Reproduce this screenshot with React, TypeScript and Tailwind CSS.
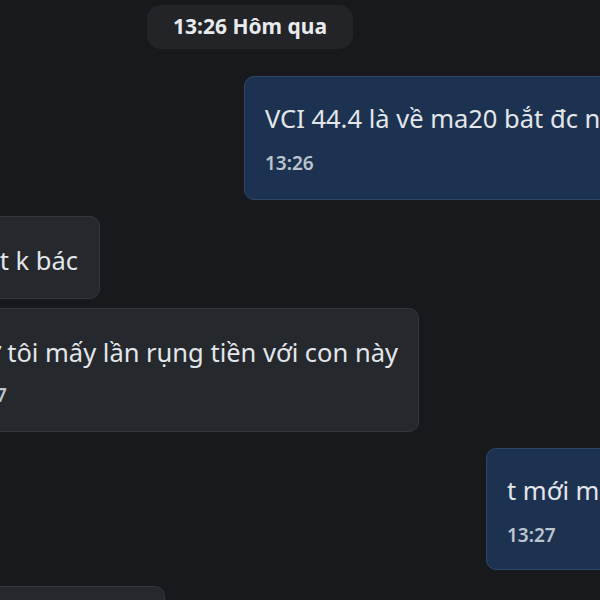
export default function App() {
  const font = { fontFamily: '"Noto Sans", "Segoe UI", sans-serif' };
  return (
    <div
      className="w-[600px] h-[600px] overflow-hidden bg-[#17191d] flex flex-col text-[#e3e6ea]"
      style={font}
    >
      <div className="mt-[5px] ml-[147px] shrink-0 w-[206px] h-[44px] rounded-[14px] bg-[#222428] flex items-center justify-center text-[21px] font-bold text-[#e8eaed]">
        13:26 Hôm qua
      </div>

      <div className="mt-[27px] ml-[244px] shrink-0 w-[420px] h-[124px] rounded-[10px] bg-[#1d3250] border border-[#2e4766] pl-[20px] pt-[24px]">
        <div className="text-[25.5px] leading-[34px] whitespace-nowrap">VCI 44.4 là về ma20 bắt đc nhiều</div>
        <div className="mt-[15px] text-[19px] leading-[26px] font-semibold text-[#bcc4ce]">13:26</div>
      </div>

      <div className="mt-[16px] w-[100px] flex justify-end shrink-0">
        <div className="shrink-0 h-[83px] rounded-[10px] bg-[#25282d] border border-[#33363c] pr-[21px] pt-[26px] whitespace-nowrap pl-[40px]">
          <div className="text-[25.5px] leading-[34px]">đc t k bác</div>
        </div>
      </div>

      <div className="mt-[9px] w-[419px] flex justify-end shrink-0">
        <div className="shrink-0 h-[124px] rounded-[10px] bg-[#25282d] border border-[#33363c] pr-[20px] pt-[26px] whitespace-nowrap pl-[20px] flex flex-col items-start">
          <div className="text-[25.5px] leading-[34px]">Như tôi mấy lần rụng tiền với con này</div>
          <div className="mt-[13px] ml-[10px] text-[19px] leading-[26px] font-semibold text-[#bcc4ce]">13:27</div>
        </div>
      </div>

      <div className="mt-[16px] ml-[486px] shrink-0 w-[300px] h-[122px] rounded-[10px] bg-[#1d3250] border border-[#2e4766] pl-[20px] pt-[24px]">
        <div className="text-[25.5px] leading-[34px] whitespace-nowrap">t mới mua lại</div>
        <div className="mt-[15px] text-[19px] leading-[26px] font-semibold text-[#bcc4ce]">13:27</div>
      </div>

      <div className="mt-[16px] w-[165px] flex justify-end shrink-0">
        <div className="shrink-0 w-[300px] h-[80px] rounded-[10px] bg-[#25282d] border border-[#33363c]" />
      </div>
    </div>
  );
}
